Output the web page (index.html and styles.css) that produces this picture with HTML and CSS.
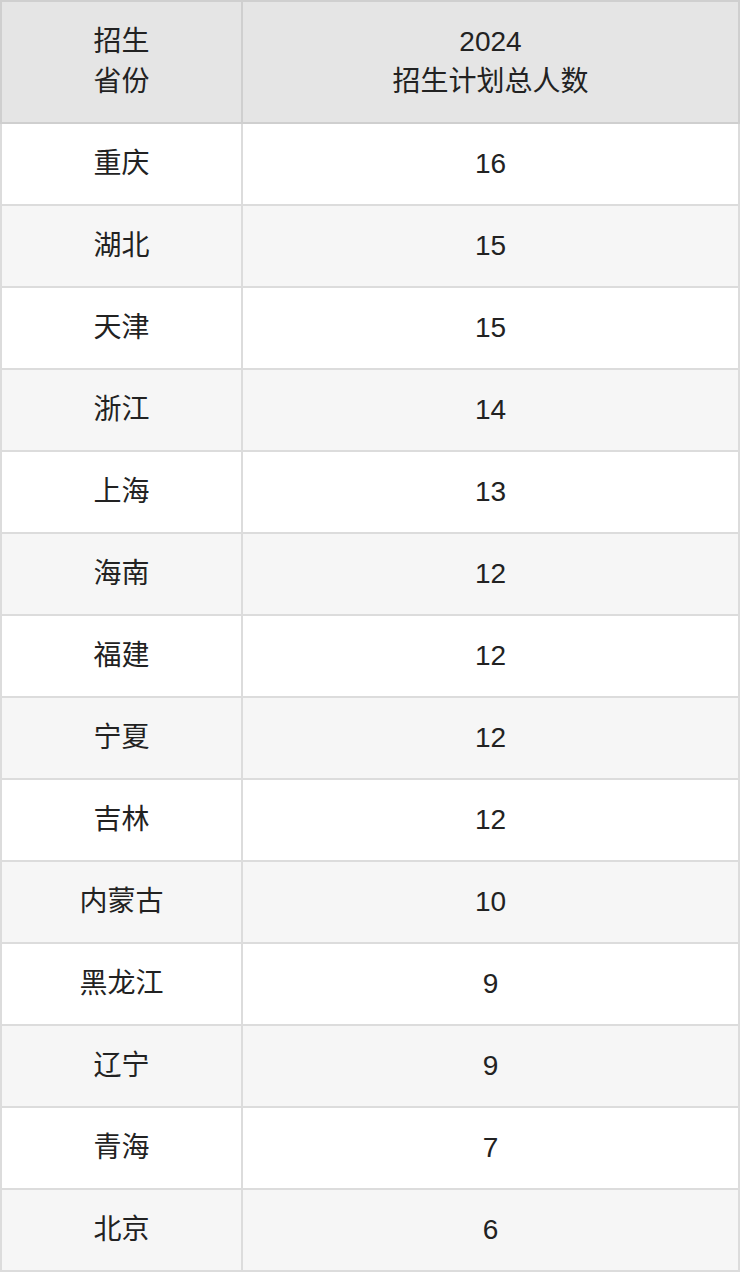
FILE: index.html
```html
<!DOCTYPE html>
<html lang="zh">
<head>
<meta charset="utf-8">
<link rel="stylesheet" href="styles.css">
</head>
<body>
<table class="plan">
  <thead>
    <tr><th class="c1">招生<br>省份</th><th class="c2">2024<br>招生计划总人数</th></tr>
  </thead>
  <tbody>
    <tr><td>重庆</td><td>16</td></tr>
    <tr><td>湖北</td><td>15</td></tr>
    <tr><td>天津</td><td>15</td></tr>
    <tr><td>浙江</td><td>14</td></tr>
    <tr><td>上海</td><td>13</td></tr>
    <tr><td>海南</td><td>12</td></tr>
    <tr><td>福建</td><td>12</td></tr>
    <tr><td>宁夏</td><td>12</td></tr>
    <tr><td>吉林</td><td>12</td></tr>
    <tr><td>内蒙古</td><td>10</td></tr>
    <tr><td>黑龙江</td><td>9</td></tr>
    <tr><td>辽宁</td><td>9</td></tr>
    <tr><td>青海</td><td>7</td></tr>
    <tr><td>北京</td><td>6</td></tr>
  </tbody>
</table>
</body>
</html>
```
FILE: styles.css
```css
html, body {
  margin: 0;
  padding: 0;
  background: #ffffff;
}
.plan {
  border-collapse: collapse;
  width: 740px;
  table-layout: fixed;
  font-family: "Liberation Sans", "Noto Sans CJK SC", sans-serif;
  font-size: 28px;
  line-height: 40px;
  color: #222222;
}
.plan th, .plan td {
  border: 2px solid #dcdcdc;
  text-align: center;
  vertical-align: middle;
  padding: 0;
}
.plan th {
  height: 120px;
  background: #e5e5e5;
  font-weight: normal;
  border-color: #cfcfcf;
}
.plan .c1 { width: 239px; }
.plan td {
  height: 80px;
}
.plan tbody tr:nth-child(even) td {
  background: #f6f6f6;
}
```
